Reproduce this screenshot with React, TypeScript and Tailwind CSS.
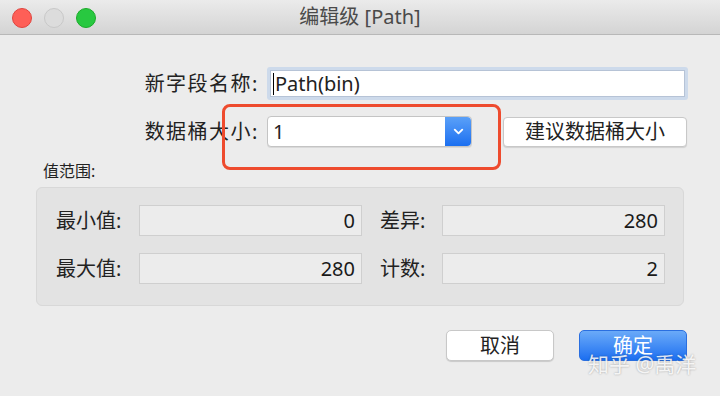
import { ChevronDown } from 'lucide-react';

const font = { fontFamily: '"Helvetica Neue", "Noto Sans", "Noto Sans CJK SC", sans-serif' };

function Field({ value }: { value: string }) {
  return (
    <div className="flex h-[31px] items-center justify-end border border-[#cfcfcf] bg-[#ececec] px-[6px] text-[20px] text-[#1a1a1a]">
      {value}
    </div>
  );
}

export default function App() {
  return (
    <div
      className="relative h-[396px] w-[720px] overflow-hidden bg-[#ececec] leading-[24px] text-[#222]"
      style={font}
    >
      {/* title bar */}
      <div className="relative flex h-[35px] items-center justify-center border-b border-[#b8b8b8] bg-gradient-to-b from-[#ebebeb] to-[#d4d4d4]">
        <div className="absolute left-[12px] top-[8px] flex gap-[12px]">
          <span className="h-[20px] w-[20px] rounded-full border border-[#e0443e] bg-[#fe5f57]" />
          <span className="h-[20px] w-[20px] rounded-full border border-[#c8c8c8] bg-[#dcdcdc]" />
          <span className="h-[20px] w-[20px] rounded-full border border-[#1aab29] bg-[#28c840]" />
        </div>
        <span className="text-[20px] text-[#4a4a4a]">编辑级 [Path]</span>
      </div>

      {/* form rows */}
      <div className="flex flex-col gap-[16px] pt-[32px]">
        <div className="flex items-center">
          <span className="w-[259px] whitespace-nowrap text-right text-[20px] tracking-[1.5px]">新字段名称:</span>
          <div className="ml-[8px] w-[421px] rounded-[3px] bg-[#cddaeb] p-[3px]">
            <div className="flex h-[27px] items-center border border-[#b6c3d6] bg-white pl-[2px] text-[20px]">
              <span className="mr-[1px] h-[22px] w-[1px] bg-black" />
              Path(bin)
            </div>
          </div>
        </div>
        <div className="flex items-center">
          <span className="w-[259px] whitespace-nowrap text-right text-[20px] tracking-[1.5px]">数据桶大小:</span>
          <div className="ml-[8px] flex h-[31px] w-[205px] items-stretch rounded-[4px] border border-[#c4c4c4] bg-white shadow-[0_1px_0_rgba(0,0,0,0.08)]">
            <span className="flex flex-1 items-center pl-[5px] text-[20px]">1</span>
            <span className="flex w-[26px] items-center justify-center rounded-r-[4px] bg-gradient-to-b from-[#5aa0f8] to-[#1a6ff0]">
              <ChevronDown size={15} strokeWidth={3} color="white" />
            </span>
          </div>
          <button className="ml-[31px] flex h-[30px] w-[184px] items-center justify-center whitespace-nowrap rounded-[4px] border border-[#c8c8c8] bg-white text-[20px] shadow-[0_1px_1px_rgba(0,0,0,0.12)]">
            建议数据桶大小
          </button>
        </div>
      </div>

      {/* 值范围 */}
      <div className="pl-[43px] pt-[12px] text-[16px] text-[#222]">值范围:</div>
      <div className="ml-[36px] mt-[4px] w-[648px] rounded-[6px] border border-[#d8d8d8] bg-[#e3e3e3] pb-[21px] pl-[19px] pt-[17px]">
        <div className="grid grid-cols-[83px_223px_80px_223px] items-center gap-y-[17px]">
          <span className="whitespace-nowrap text-[20px]">最小值:</span>
          <Field value="0" />
          <span className="whitespace-nowrap pl-[18px] text-[20px]">差异:</span>
          <Field value="280" />
          <span className="whitespace-nowrap text-[20px]">最大值:</span>
          <Field value="280" />
          <span className="whitespace-nowrap pl-[18px] text-[20px]">计数:</span>
          <Field value="2" />
        </div>
      </div>

      {/* footer buttons */}
      <div className="mt-[24px] flex justify-end gap-[25px] pr-[33px]">
        <button className="flex h-[31px] w-[108px] items-center justify-center rounded-[5px] border border-[#c8c8c8] bg-white text-[20px] shadow-[0_1px_1px_rgba(0,0,0,0.15)]">
          取消
        </button>
        <button className="flex h-[31px] w-[108px] items-center justify-center rounded-[5px] border border-[#2a6fe0] bg-gradient-to-b from-[#6aaaf8] to-[#1a6ef0] text-[20px] text-white">
          确定
        </button>
      </div>

      {/* highlight box */}
      <div className="absolute left-[222px] top-[104px] h-[66px] w-[279px] rounded-[8px] border-[3px] border-[#ee4b2e]" />

      {/* watermark */}
      <div className="absolute left-[588px] top-[352px] text-[21px] text-white/85 [text-shadow:0_0_2px_rgba(0,0,0,0.35)]">
        知乎 @禹洋
      </div>
    </div>
  );
}
